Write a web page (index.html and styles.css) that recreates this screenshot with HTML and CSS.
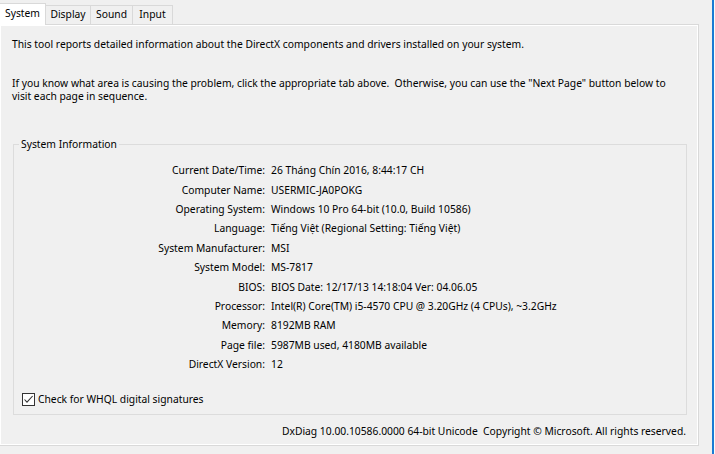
FILE: index.html
```html
<!DOCTYPE html>
<html>
<head>
<meta charset="utf-8">
<link rel="stylesheet" href="styles.css">
</head>
<body>
<div class="screen">
  <div class="main">
    <div class="tabs">
      <div class="tab active">System</div>
      <div class="tab t-display">Display</div>
      <div class="tab t-sound">Sound</div>
      <div class="tab t-input">Input</div>
    </div>
    <div class="panel">
      <p class="intro">This tool reports detailed information about the DirectX components and drivers installed on your system.</p>
      <p class="help">If you know what area is causing the problem, click the appropriate tab above.&nbsp; Otherwise, you can use the "Next Page" button below to<br>visit each page in sequence.</p>
      <fieldset class="group">
        <legend>System Information</legend>
        <div class="info">
          <div class="k">Current Date/Time:</div><div class="v">26 Tháng Chín 2016, 8:44:17 CH</div>
          <div class="k">Computer Name:</div><div class="v">USERMIC-JA0POKG</div>
          <div class="k">Operating System:</div><div class="v">Windows 10 Pro 64-bit (10.0, Build 10586)</div>
          <div class="k">Language:</div><div class="v">Tiếng Việt (Regional Setting: Tiếng Việt)</div>
          <div class="k">System Manufacturer:</div><div class="v">MSI</div>
          <div class="k">System Model:</div><div class="v">MS-7817</div>
          <div class="k">BIOS:</div><div class="v">BIOS Date: 12/17/13 14:18:04 Ver: 04.06.05</div>
          <div class="k">Processor:</div><div class="v">Intel(R) Core(TM) i5-4570 CPU @ 3.20GHz (4 CPUs), ~3.2GHz</div>
          <div class="k">Memory:</div><div class="v">8192MB RAM</div>
          <div class="k">Page file:</div><div class="v">5987MB used, 4180MB available</div>
          <div class="k">DirectX Version:</div><div class="v">12</div>
        </div>
        <div class="check">
          <span class="box"><svg width="11" height="11" viewBox="0 0 11 11"><path d="M1.5 5.5 L4 8.2 L9.6 2" fill="none" stroke="#333" stroke-width="1.1"/></svg></span>
          <span>Check for WHQL digital signatures</span>
        </div>
      </fieldset>
      <div class="footer">DxDiag 10.00.10586.0000 64-bit Unicode&nbsp; Copyright © Microsoft. All rights reserved.</div>
    </div>
  </div>
  <div class="gutter"></div>
  <div class="blue"></div>
  <div class="rim"></div>
</div>
</body>
</html>
```
FILE: styles.css
```css
* { box-sizing: border-box; }
html, body { margin: 0; padding: 0; }
body {
  background: #f0f0f0;
  font-family: "Noto Sans", "Open Sans", sans-serif;
  font-size: 10.3px;
  color: #000;
  width: 715px;
  height: 454px;
  overflow: hidden;
}
.screen {
  display: flex;
  width: 715px;
  height: 454px;
}
.main { width: 699px; flex: none; }
.gutter { width: 13px; flex: none; }
.blue { width: 2px; flex: none; background: #1a7bd3; }
.rim { width: 1px; flex: none; background: #fafafa; }

.tabs {
  display: flex;
  align-items: flex-end;
  height: 24px;
  position: relative;
  z-index: 1;
}
.tab {
  height: 19px;
  border: 1px solid #d9d9d9;
  border-bottom: 0;
  border-left: 0;
  background: #f0f0f0;
  display: flex;
  align-items: center;
  justify-content: center;
  line-height: 13px;
  padding-bottom: 1px;
}
.tab.active {
  width: 46px;
  height: 22px;
  background: #fff;
  border-left: 0;
  margin-bottom: -1px;
  padding-bottom: 2px;
}
.t-display { width: 45px; }
.t-sound { width: 42px; }
.t-input { width: 40px; }

.panel {
  height: 422px;
  border: 1px solid #d9d9d9;
  border-left: 0;
  box-shadow: inset 1px 1px 0 #fff, inset -1px -1px 0 #fff;
  padding: 13px 11px 0 12px;
  line-height: 13px;
}
.intro { margin: 0; }
.help { margin: 26px 0 0; }

.group {
  margin: 35px 0 0 1px;
  padding: 0 0 8px 0;
  border: 1px solid #dcdcdc;
  min-width: 0;
}
.group legend {
  margin-left: 5px;
  padding: 0 2px;
  line-height: 13px;
}
.info {
  display: grid;
  grid-template-columns: 251px 1fr;
  column-gap: 6px;
  grid-auto-rows: 19.4px;
  align-items: center;
  margin-top: 10px;
}
.k { text-align: right; white-space: nowrap; }
.v { white-space: nowrap; }
.check {
  display: flex;
  align-items: center;
  gap: 3px;
  margin: 19px 0 0 8px;
}
.box {
  width: 13px;
  height: 13px;
  border: 1px solid #333;
  background: #fff;
  display: flex;
  align-items: center;
  justify-content: center;
}
.box svg { display: block; }
.footer {
  margin-top: 10px;
  text-align: right;
  padding-right: 1px;
}
```
